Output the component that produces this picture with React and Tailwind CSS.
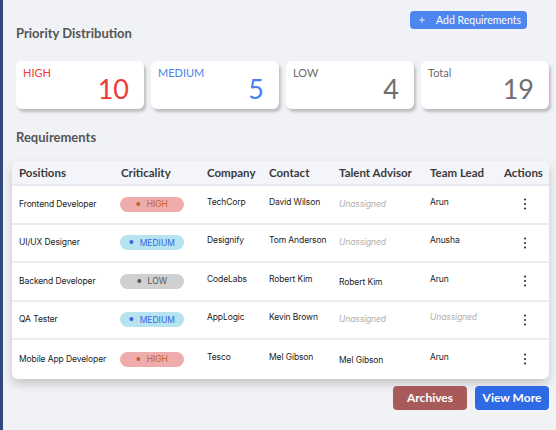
import { Plus } from "lucide-react";

const stats = [
  { label: "HIGH", value: 10, labelColor: "text-[#f03a3a]", valueColor: "text-[#f03a3a]" },
  { label: "MEDIUM", value: 5, labelColor: "text-[#4a82ea]", valueColor: "text-[#4a82ea]" },
  { label: "LOW", value: 4, labelColor: "text-[#6b6b6b]", valueColor: "text-[#6e6e6e]" },
  { label: "Total", value: 19, labelColor: "text-[#6b6b6b]", valueColor: "text-[#6e6e6e]" },
];

const pillStyles = {
  HIGH: "bg-[#eeadac] text-[#c2622f]",
  MEDIUM: "bg-[#b6e3f0] text-[#3a63e4]",
  LOW: "bg-[#d0d0d0] text-[#555555]",
};

const rows = [
  { position: "Frontend Developer", level: "HIGH", company: "TechCorp", contact: "David Wilson", advisor: null, lead: "Arun" },
  { position: "UI/UX Designer", level: "MEDIUM", company: "Designify", contact: "Tom Anderson", advisor: null, lead: "Anusha" },
  { position: "Backend Developer", level: "LOW", company: "CodeLabs", contact: "Robert Kim", advisor: "Robert Kim", lead: "Arun" },
  { position: "QA Tester", level: "MEDIUM", company: "AppLogic", contact: "Kevin Brown", advisor: null, lead: null },
  { position: "Mobile App Developer", level: "HIGH", company: "Tesco", contact: "Mel Gibson", advisor: "Mel Gibson", lead: "Arun" },
];

const cols = "grid grid-cols-[102px_86px_62px_70px_91px_74px_1fr] pl-[7px]";

const Unassigned = () => (
  <span className="italic text-[#b0b0b0]">Unassigned</span>
);

const Dots = () => (
  <svg width="4" height="12" viewBox="0 0 4 12" className="ml-[19px]">
    <circle cx="2" cy="1.5" r="1.1" fill="#333" />
    <circle cx="2" cy="6" r="1.1" fill="#333" />
    <circle cx="2" cy="10.5" r="1.1" fill="#333" />
  </svg>
);

export default function App() {
  return (
    <div className="w-[556px] h-[430px] bg-[#f1f2f5] border-l-[3px] border-[#2f4b7c] overflow-hidden font-['Lato',sans-serif]">
      <div className="flex justify-end pt-[11px] pr-[29px]">
        <button className="flex items-center h-[18px] pl-[8px] pr-[6px] rounded-[4px] bg-[#4c86ee] text-white text-[10.5px] leading-none whitespace-nowrap">
          <Plus size={8} strokeWidth={2.4} className="mr-[10px]" />
          Add Requirements
        </button>
      </div>

      <h2 className="ml-[13px] mt-[-5px] text-[13px] font-bold text-[#555]">Priority Distribution</h2>

      <div className="flex gap-[7px] ml-[13px] mt-[17px]">
        {stats.map((s) => (
          <div
            key={s.label}
            className="w-[128px] h-[48px] bg-white rounded-[6px] shadow-[2px_3px_3px_rgba(0,0,0,0.22)] px-[7px] pt-[5px] relative"
          >
            <div className={`text-[11px] leading-[14px] ${s.labelColor}`}>{s.label}</div>
            <div className={`absolute right-[15px] top-[12px] text-[27px] leading-[32px] ${s.valueColor}`}>{s.value}</div>
          </div>
        ))}
      </div>

      <h2 className="ml-[13px] mt-[19px] text-[13px] font-bold text-[#555]">Requirements</h2>

      <div className="ml-[9px] mt-[14px] w-[537px] bg-white rounded-[6px] shadow-[0_5px_10px_rgba(0,0,0,0.18)] overflow-hidden">
        <div className={`${cols} h-[25px] items-center bg-[#f4f5fa] border-b-2 border-[#e8e8f0] text-[11.5px] font-bold text-[#3a3a3a]`}>
          <div>Positions</div>
          <div>Criticality</div>
          <div>Company</div>
          <div>Contact</div>
          <div>Talent Advisor</div>
          <div>Team Lead</div>
          <div>Actions</div>
        </div>
        {rows.map((r, i) => (
          <div
            key={r.position}
            className={`${cols} h-[38.5px] items-center text-[8.5px] tracking-[-0.1px] text-[#222] font-['Inter',sans-serif] ${i < rows.length - 1 ? "border-b-2 border-[#ececf2]" : ""}`}
          >
            <div>{r.position}</div>
            <div>
              <span className={`inline-flex items-center justify-center w-[64px] h-[15px] ml-[-1px] rounded-full text-[8.5px] tracking-normal ${pillStyles[r.level]}`}>
                <span className="mr-[6px] text-[5px]">●</span>
                {r.level}
              </span>
            </div>
            <div className="mb-[4px]">{r.company}</div>
            <div className="mb-[4px]">{r.contact}</div>
            <div>{r.advisor ? <span className="mt-[3px] block">{r.advisor}</span> : <Unassigned />}</div>
            <div className="mb-[4px]">{r.lead ? r.lead : <Unassigned />}</div>
            <div><Dots /></div>
          </div>
        ))}
      </div>

      <div className="flex justify-end gap-[8px] pr-[7px] mt-[7px]">
        <button className="w-[74px] h-[24px] rounded-[4px] bg-[#a85a5b] text-white text-[12px] font-bold">Archives</button>
        <button className="w-[74px] h-[24px] rounded-[4px] bg-[#2e6ae6] text-white text-[12px] font-bold">View More</button>
      </div>
    </div>
  );
}
